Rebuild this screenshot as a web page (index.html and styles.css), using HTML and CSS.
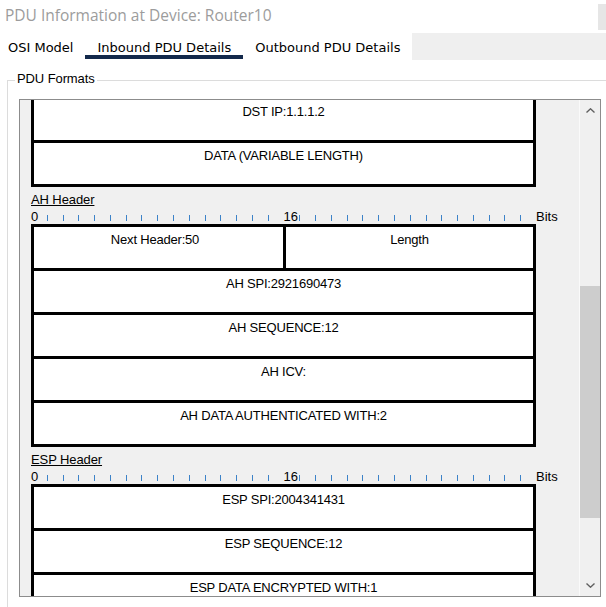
FILE: index.html
```html
<!DOCTYPE html>
<html>
<head>
<meta charset="utf-8">
<title>PDU Information</title>
<link rel="stylesheet" href="styles.css">
</head>
<body>
<div class="titlebar">
  <div class="title">PDU Information at Device: Router10</div>
  <div class="title-btn"></div>
</div>
<div class="tabs">
  <div class="tab first">OSI Model</div>
  <div class="tab active">Inbound PDU Details</div>
  <div class="tab">Outbound PDU Details</div>
  <div class="tab-fill"></div>
</div>
<div class="group">
  <div class="group-label">PDU Formats</div>
  <div class="scrollbox">
    <div class="viewport">
      <div class="pdu-box cut">
        <div class="row first-cut"><div class="cell">DST IP:1.1.1.2</div></div>
        <div class="row"><div class="cell">DATA (VARIABLE LENGTH)</div></div>
      </div>

      <div class="hdr">AH Header</div>
      <div class="ruler-row">
        <div class="ruler">
          <span class="rl">0</span><i></i><i></i><i></i><i></i><i></i><i></i><i></i><i></i><i></i><i></i><i></i><i></i><i></i><i></i><i></i><span class="rl">16</span><i></i><i></i><i></i><i></i><i></i><i></i><i></i><i></i><i></i><i></i><i></i><i></i><i></i><i></i><i></i>
        </div>
        <span class="bits">Bits</span>
      </div>
      <div class="pdu-box">
        <div class="row"><div class="cell half left">Next Header:50</div><div class="cell half right">Length</div></div>
        <div class="row"><div class="cell">AH SPI:2921690473</div></div>
        <div class="row"><div class="cell">AH SEQUENCE:12</div></div>
        <div class="row"><div class="cell">AH ICV:</div></div>
        <div class="row"><div class="cell">AH DATA AUTHENTICATED WITH:2</div></div>
      </div>

      <div class="hdr">ESP Header</div>
      <div class="ruler-row">
        <div class="ruler">
          <span class="rl">0</span><i></i><i></i><i></i><i></i><i></i><i></i><i></i><i></i><i></i><i></i><i></i><i></i><i></i><i></i><i></i><span class="rl">16</span><i></i><i></i><i></i><i></i><i></i><i></i><i></i><i></i><i></i><i></i><i></i><i></i><i></i><i></i><i></i>
        </div>
        <span class="bits">Bits</span>
      </div>
      <div class="pdu-box">
        <div class="row"><div class="cell">ESP SPI:2004341431</div></div>
        <div class="row"><div class="cell">ESP SEQUENCE:12</div></div>
        <div class="row"><div class="cell">ESP DATA ENCRYPTED WITH:1</div></div>
      </div>
    </div>
    <div class="scrollbar">
      <div class="sb-btn">
        <svg width="9" height="5" viewBox="0 0 9 5"><polyline points="0.5,4.5 4.5,0.8 8.5,4.5" fill="none" stroke="#606060" stroke-width="1.4"/></svg>
      </div>
      <div class="sb-track"><div class="sb-thumb"></div></div>
      <div class="sb-btn">
        <svg width="9" height="5" viewBox="0 0 9 5"><polyline points="0.5,0.5 4.5,4.2 8.5,0.5" fill="none" stroke="#606060" stroke-width="1.4"/></svg>
      </div>
    </div>
  </div>
</div>
</body>
</html>
```

FILE: styles.css
```css
html, body {
  margin: 0;
  padding: 0;
  background: #ffffff;
}
body {
  width: 606px;
  height: 607px;
  overflow: hidden;
  font-family: "Liberation Sans", Arial, sans-serif;
  font-size: 13px;
  line-height: 15px;
  color: #000;
}

/* title */
.titlebar {
  display: flex;
  align-items: flex-start;
  height: 33px;
}
.title {
  padding: 5px 0 0 5px;
  font-family: "Open Sans", "Noto Sans", sans-serif;
  font-size: 15.5px;
  line-height: 20px;
  color: #9c9c9c;
  white-space: nowrap;
}
.title-btn {
  margin-left: auto;
  margin-top: 4px;
  width: 8px;
  height: 26px;
  background: #e6e6e6;
}

/* tabs */
.tabs {
  display: flex;
  align-items: flex-start;
  height: 27px;
}
.tab {
  padding: 7px 12px 0;
  font-family: "DejaVu Sans", Verdana, sans-serif;
  font-size: 13px;
  line-height: 15px;
  white-space: nowrap;
  border-bottom: 4px solid transparent;
}
.tab.first {
  padding-left: 8px;
}
.tab.active {
  border-bottom-color: #13294b;
}
.tab-fill {
  flex: 1;
  height: 27px;
  background: #efefef;
}

/* group box */
.group {
  margin: 20px 0 0 7px;
  border-top: 1px solid #dcdcdc;
  border-left: 1px solid #dcdcdc;
  height: 526px;
}
.group-label {
  display: block;
  width: fit-content;
  margin: -10px 0 0 7px;
  padding: 0 2px;
  background: #fff;
  letter-spacing: -0.1px;
}

/* scroll area */
.scrollbox {
  display: flex;
  margin: 13px 0 0 11px;
  width: 582px;
  height: 498px;
  box-sizing: border-box;
  border: 1px solid #8c8c8c;
  background: #f0f0f0;
}
.viewport {
  width: 559px;
  height: 496px;
  overflow: hidden;
  padding-left: 11px;
  box-sizing: border-box;
}

.pdu-box {
  width: 505px;
  box-sizing: border-box;
  border: 3px solid #000;
  background: #fff;
}
.pdu-box.cut {
  border-top: none;
}
.row {
  display: flex;
  height: 41px;
  border-top: 3px solid #000;
}
.row:first-child {
  border-top: none;
}
.row.first-cut {
  height: 40px;
}
.cell {
  flex: 1;
  padding-top: 5px;
  text-align: center;
  letter-spacing: -0.2px;
  white-space: nowrap;
}
.row.first-cut .cell {
  padding-top: 4px;
}
.cell.half.left {
  flex: none;
  width: 249px;
  padding-right: 7px;
  box-sizing: border-box;
}
.cell.half.right {
  border-left: 3px solid #000;
}

.hdr {
  margin-top: 5px;
  width: fit-content;
  letter-spacing: -0.1px;
  text-decoration: underline;
}
.ruler-row {
  display: flex;
  margin-top: 2px;
  height: 15px;
}
.ruler {
  display: grid;
  grid-template-columns: repeat(32, 1fr);
  width: 505px;
  height: 15px;
}
.ruler i {
  display: block;
  width: 0;
  height: 6px;
  margin-top: 6px;
  border-left: 1px solid #3c82c8;
}
.rl {
  white-space: nowrap;
}
.bits {
  white-space: nowrap;
}

/* scrollbar */
.scrollbar {
  display: flex;
  flex-direction: column;
  width: 20px;
  border-left: 1px solid #fafafa;
  background: #f0f0f0;
}
.sb-btn {
  display: flex;
  align-items: center;
  justify-content: center;
  height: 21px;
}
.sb-btn svg {
  display: block;
}
.sb-track {
  flex: 1;
}
.sb-thumb {
  margin-top: 165px;
  height: 232px;
  background: #cdcdcd;
}
```
